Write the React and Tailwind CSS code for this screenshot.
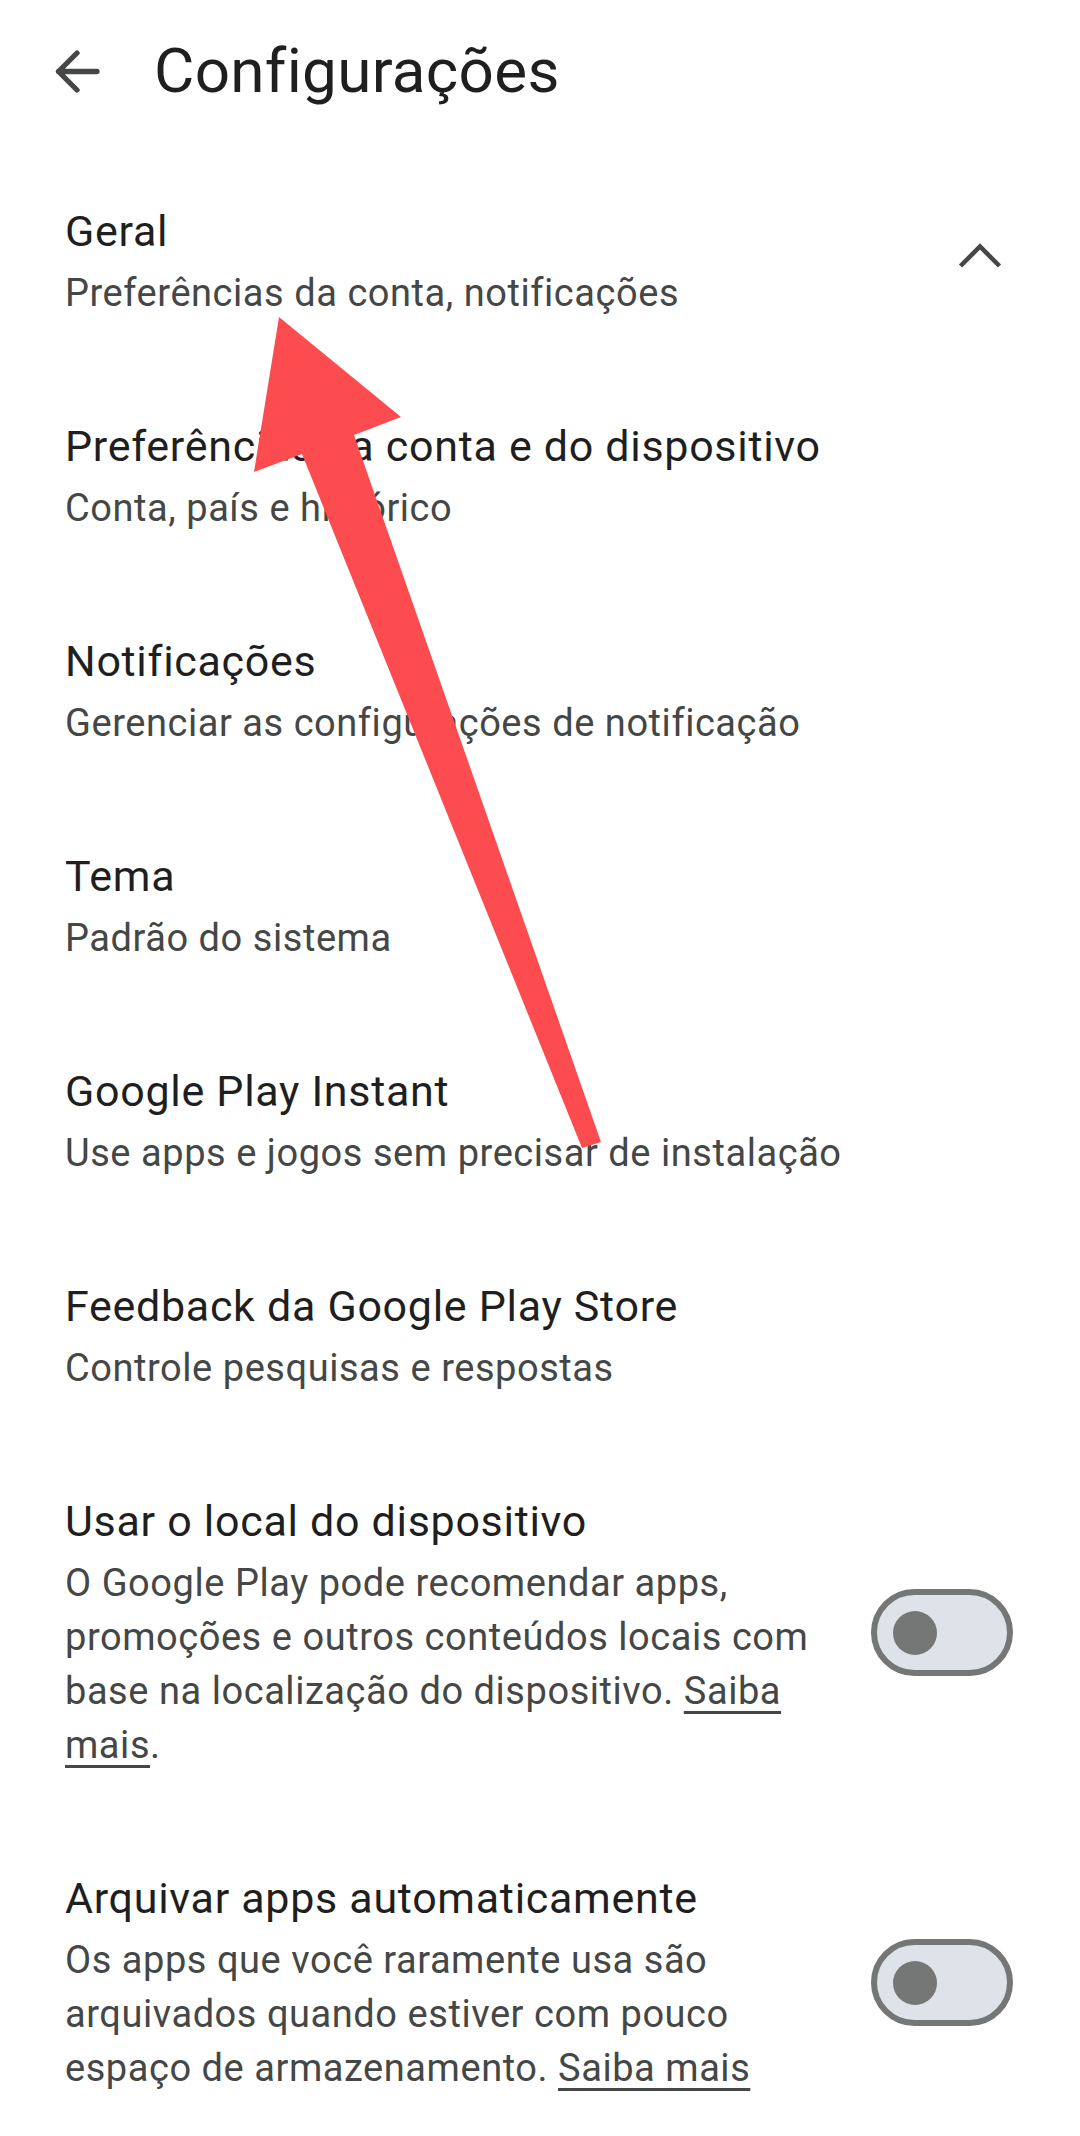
const rows = [
  { title: "Preferências da conta e do dispositivo", sub: "Conta, país e histórico" },
  { title: "Notificações", sub: "Gerenciar as configurações de notificação" },
  { title: "Tema", sub: "Padrão do sistema" },
  { title: "Google Play Instant", sub: "Use apps e jogos sem precisar de instalação" },
  { title: "Feedback da Google Play Store", sub: "Controle pesquisas e respostas" },
];

const titleCls = "text-[43px] leading-[56px] tracking-[0.7px] text-[#1f1f1f]";
const subCls = "mt-[7px] text-[38px] leading-[54px] tracking-[0.55px] text-[#444746]";

function Toggle() {
  return (
    <div className="flex items-center shrink-0 w-[142px] h-[87px] rounded-full border-[6px] border-[#747775] bg-[#dee3ea]">
      <div className="ml-[16px] w-[44px] h-[44px] rounded-full bg-[#747775]" />
    </div>
  );
}

function Link({ children }) {
  return (
    <span className="underline decoration-[2.5px] underline-offset-[7px]">{children}</span>
  );
}

export default function App() {
  return (
    <div
      className="relative w-[1080px] min-h-[2136px] bg-white overflow-hidden"
      style={{ fontFamily: "Roboto, 'Noto Sans', sans-serif" }}
    >
      {/* top bar */}
      <div className="flex items-center h-[142px]">
        <svg className="ml-[44px] shrink-0" width="66" height="66" viewBox="0 0 66 66" fill="none">
          <path
            d="M33 15 L14.5 33.5 L33 52 M14.5 33.5 H53"
            stroke="#444746"
            strokeWidth="5.3"
            strokeLinecap="round"
            strokeLinejoin="round"
          />
        </svg>
        <h1 className="ml-[44px] text-[62px] leading-[64px] tracking-[0.3px] text-[#1f1f1f]">
          Configurações
        </h1>
      </div>

      <div className="mt-[12px] pl-[65px] pr-[67px]">
        {/* Geral header row */}
        <div className="flex items-center justify-between py-[49px]">
          <div>
            <div className={titleCls}>Geral</div>
            <div className={subCls}>Preferências da conta, notificações</div>
          </div>
          <svg width="66" height="66" viewBox="0 0 66 66" fill="none">
            <path d="M13.5 37 L33 17.5 L52.5 37" stroke="#444746" strokeWidth="4.5" />
          </svg>
        </div>

        {rows.map((row) => (
          <div key={row.title} className="py-[49px]">
            <div className={titleCls}>{row.title}</div>
            <div className={subCls}>{row.sub}</div>
          </div>
        ))}

        <div className="flex items-center py-[49px]">
          <div className="flex-1 mr-[44px]">
            <div className={titleCls}>Usar o local do dispositivo</div>
            <div className={subCls}>
              O Google Play pode recomendar apps, promoções e outros conteúdos locais com base na
              localização do dispositivo. <Link>Saiba mais</Link>.
            </div>
          </div>
          <Toggle />
        </div>

        <div className="flex items-center py-[49px]">
          <div className="flex-1 mr-[44px]">
            <div className={titleCls}>Arquivar apps automaticamente</div>
            <div className={subCls}>
              Os apps que você raramente usa são arquivados quando estiver com pouco espaço de
              armazenamento. <Link>Saiba mais</Link>
            </div>
          </div>
          <Toggle />
        </div>
      </div>

      {/* red annotation arrow */}
      <svg
        className="absolute left-0 top-0 pointer-events-none"
        width="1080"
        height="2136"
        viewBox="0 0 1080 2136"
      >
        <polygon
          points="279,317 401,417 354,435 601,1142 582,1148 302,454 254,472"
          fill="#fd4c50"
        />
      </svg>
    </div>
  );
}
